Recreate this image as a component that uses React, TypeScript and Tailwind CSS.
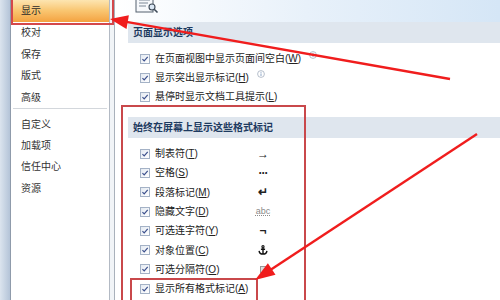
const navTop = ["显示", "校对", "保存", "版式", "高级"];
const navBottom = ["自定义", "加载项", "信任中心", "资源"];

function Check() {
  return (
    <span className="flex h-[10px] w-[10px] shrink-0 items-center justify-center border border-[#a4b2c6] bg-linear-to-br from-[#e4eaf2] to-white">
      <svg viewBox="0 0 10 10" className="h-[8px] w-[8px]">
        <path d="M1.8 5.2 L4 7.4 L8.4 2.4" fill="none" stroke="#3b4f8c" strokeWidth="1.5" />
      </svg>
    </span>
  );
}

function Info() {
  return (
    <svg viewBox="0 0 8 8" className="ml-[3px] h-[8px] w-[8px] -translate-y-[4px]">
      <circle cx="4" cy="4" r="3.4" fill="white" stroke="#a3afbe" strokeWidth="0.8" />
      <rect x="3.6" y="3.4" width="0.8" height="2.6" fill="#7391b8" />
      <circle cx="4" cy="2.2" r="0.5" fill="#7391b8" />
    </svg>
  );
}

function Anchor() {
  return (
    <svg viewBox="0 0 12 12" className="h-[12px] w-[12px]">
      <circle cx="6" cy="2" r="1.3" fill="none" stroke="#111" strokeWidth="1.3" />
      <path d="M6 3.3 V10.8 M3.5 5 H8.5 M1.3 7 Q1.8 10.9 6 10.9 Q10.2 10.9 10.7 7" fill="none" stroke="#111" strokeWidth="1.7" />
    </svg>
  );
}

const marks = [
  { label: "制表符", key: "T", glyph: <span className="text-[12px] font-bold">→</span> },
  { label: "空格", key: "S", glyph: <span className="text-[12px] font-bold tracking-[-1px]">···</span> },
  { label: "段落标记", key: "M", glyph: <span className="text-[12px] font-bold">↵</span> },
  {
    label: "隐藏文字",
    key: "D",
    glyph: <span className="text-[9px] text-[#8a8a8a] underline decoration-dotted">abc</span>,
  },
  { label: "可选连字符", key: "Y", glyph: <span className="text-[12px] font-bold">¬</span> },
  { label: "对象位置", key: "C", glyph: <Anchor /> },
  {
    label: "可选分隔符",
    key: "O",
    glyph: <span className="inline-block h-[7px] w-[6px] border border-[#999] bg-[#ddd]" />,
  },
  { label: "显示所有格式标记", key: "A", glyph: null },
];

export default function App() {
  return (
    <div className="relative flex h-[300px] w-[500px] overflow-hidden bg-white font-['Liberation_Sans','Noto_Sans_CJK_SC',sans-serif] text-[10px] text-[#222]">
      {/* window edge */}
      <div className="w-[11px] shrink-0 border-r border-[#8f9bab] bg-linear-to-r from-[#dbe4ee] to-[#b4c4d8]" />

      {/* nav */}
      <div className="w-[99px] shrink-0 border-r border-[#b3bac4] bg-white">
        <div className="-mt-[1px]">
          {navTop.map((t, i) => (
            <div
              key={t}
              className={
                i === 0
                  ? "flex h-[22.7px] items-center bg-linear-to-b from-[#fde8b6] via-[#f9c671] to-[#f4a23e] pl-[10px] text-[#2a2a2a]"
                  : "flex h-[21.7px] items-center pl-[10px] text-[#333]"
              }
            >
              {t}
            </div>
          ))}
        </div>
        <div className="mx-[2px] border-t border-[#d3d7dc]" />
        <div className="pt-[4px]">
          {navBottom.map((t) => (
            <div key={t} className="flex h-[21.4px] items-center pl-[10px] text-[#333]">
              {t}
            </div>
          ))}
        </div>
      </div>
      <div className="w-[5px] shrink-0 border-r border-[#a9b1bb] bg-[#f1f4f7]" />

      {/* main */}
      <div className="flex min-w-0 flex-1 flex-col">
        <div className="flex h-[22px] bg-linear-to-r from-white via-[#e8f1fa] to-[#d5e6f6] pl-[20px]">
          <svg viewBox="0 0 24 22" className="-mt-[8px] h-[22px] w-[24px]">
            <rect x="1" y="1" width="17" height="19" fill="#f7f9fc" stroke="#55606e" strokeWidth="1" />
            <path d="M4 5 H15 M4 8 H15 M4 11 H13 M4 14 H11" stroke="#7d8896" strokeWidth="1" />
            <circle cx="17" cy="15" r="3" fill="#dbe8f5" stroke="#3e4a58" strokeWidth="1.1" />
            <path d="M19.2 17.2 L22.5 20.5" stroke="#3e4a58" strokeWidth="1.6" />
          </svg>
        </div>

        <div className="ml-[13px] flex h-[21px] items-center bg-[#dfe6ee] pl-[5px] font-bold text-[#1d3a60]">
          页面显示选项
        </div>

        <div className="mt-[6px]">
          <div className="flex h-[19px] items-center gap-[5px] pl-[25px]">
            <Check />
            <span>
              在页面视图中显示页面间空白(<u>W</u>)
            </span>
            <Info />
          </div>
          <div className="flex h-[19px] items-center gap-[5px] pl-[25px]">
            <Check />
            <span>
              显示突出显示标记(<u>H</u>)
            </span>
            <Info />
          </div>
          <div className="flex h-[19px] items-center gap-[5px] pl-[25px]">
            <Check />
            <span>
              悬停时显示文档工具提示(<u>L</u>)
            </span>
          </div>
        </div>

        <div className="mt-[11px] ml-[13px] flex h-[21px] items-center bg-[#dfe6ee] pl-[5px] font-bold text-[#1d3a60]">
          始终在屏幕上显示这些格式标记
        </div>

        <div className="mt-[6px]">
          {marks.map((m) => (
            <div key={m.key} className="flex h-[19.3px] items-center pl-[25px]">
              <Check />
              <span className="ml-[5px] w-[103px] shrink-0 whitespace-nowrap">
                {m.label}(<u>{m.key}</u>)
              </span>
              <span className="flex w-[10px] justify-center">{m.glyph}</span>
            </div>
          ))}
        </div>
      </div>

      {/* annotation boxes */}
      <div className="absolute left-[11px] top-[-3px] h-[28px] w-[103px] border-2 border-[#d4484b]" />
      <div className="absolute left-[121px] top-[105px] h-[210px] w-[185px] border-2 border-[#c9484b]" />
      <div className="absolute left-[130px] top-[278px] h-[40px] w-[128px] border-2 border-[#c9484b]" />

      {/* annotation arrows */}
      <svg viewBox="0 0 500 300" className="pointer-events-none absolute inset-0 h-[300px] w-[500px]">
        <line x1="450" y1="79" x2="125" y2="21.6" stroke="#f01d1d" strokeWidth="2.4" />
        <polygon points="110,19 126.5,29 128.9,15.2" fill="#f01d1d" />
        <line x1="477" y1="134" x2="268" y2="271.5" stroke="#f01d1d" strokeWidth="2.4" />
        <polygon points="255,280 275.5,274.8 267.9,263.2" fill="#f01d1d" />
      </svg>
    </div>
  );
}
